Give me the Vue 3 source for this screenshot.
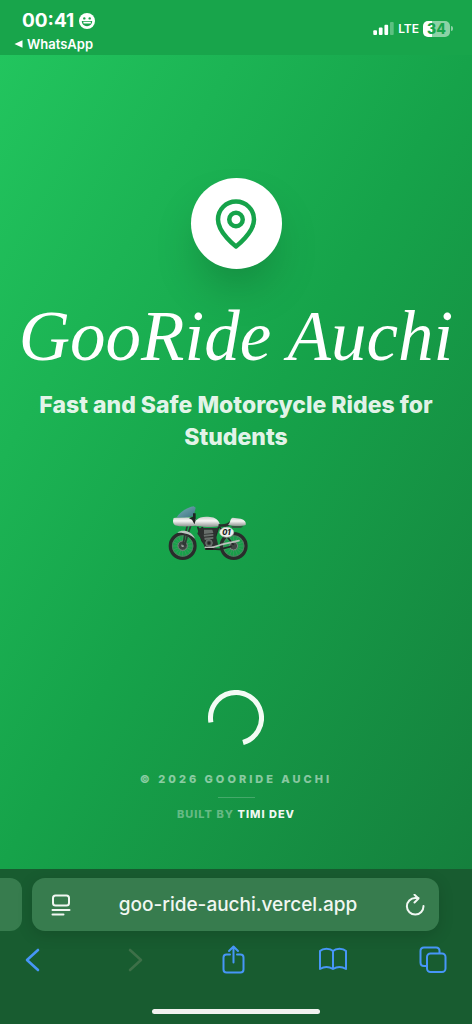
<script setup>
const year = 2026
const address = 'goo-ride-auchi.vercel.app'
</script>

<template>
  <div class="screen">
    <header class="status">
      <div class="status-left">
        <div class="clock">
          <time>00:41</time>
          <svg class="face" viewBox="0 0 16 16" aria-hidden="true">
            <circle cx="8" cy="8" r="8" fill="#fff" />
            <circle cx="5.3" cy="5.4" r="1.2" fill="#18a34a" />
            <circle cx="10.7" cy="5.4" r="1.2" fill="#18a34a" />
            <path d="M2.8 8h10.4c0 3-2.2 5.2-5.2 5.2S2.8 11 2.8 8Z" fill="#18a34a" />
            <path d="M4.2 8.800h7.600v1.800H4.600Z" fill="#fff" />
          </svg>
        </div>
        <a class="back-app" href="#">
          <svg viewBox="0 0 9 8" aria-hidden="true"><path d="M0.5 4 8.5 0.3v7.4Z" fill="#fff" /></svg>
          WhatsApp
        </a>
      </div>
      <div class="status-right">
        <svg class="signal" viewBox="0 0 22 14" aria-hidden="true" fill="#fff">
          <rect x="0" y="9" width="4" height="5" rx="1" />
          <rect x="6" y="6" width="4" height="8" rx="1" />
          <rect x="12" y="3" width="4" height="11" rx="1" />
          <rect x="18" y="0" width="4" height="14" rx="1" opacity=".3" />
        </svg>
        <span class="network">LTE</span>
        <span class="battery">34</span>
        <span class="nub"></span>
      </div>
    </header>

    <main class="splash">
      <div class="logo">
        <svg viewBox="0 0 24 24" fill="none" stroke="#16a34a" stroke-width="2" stroke-linejoin="round" aria-hidden="true">
          <path d="M20 10c0 6-8 12-8 12s-8-6-8-12a8 8 0 0 1 16 0Z" />
          <circle cx="12" cy="10" r="3" />
        </svg>
      </div>
      <h1>GooRide Auchi</h1>
      <p class="tagline">Fast and Safe Motorcycle Rides for Students</p>

      <svg class="bike" viewBox="0 0 246 165" role="img" aria-label="Motorcycle">
        <defs>
          <linearGradient id="shell" x1="0" y1="0" x2="0" y2="1">
            <stop offset="0" stop-color="#c9cdca" />
            <stop offset=".4" stop-color="#f6f6f4" />
            <stop offset="1" stop-color="#8d9390" />
          </linearGradient>
          <linearGradient id="glass" x1="0" y1="0" x2="1" y2="1">
            <stop offset="0" stop-color="#78aeb9" />
            <stop offset="1" stop-color="#3f7482" />
          </linearGradient>
        </defs>
        <g fill="none">
          <g stroke="#7f8883" stroke-width="1">
            <path d="M47 84v72M11 120h72M22 95l50 50M72 95l-50 50M33 87l28 66M61 87l-28 66M14 106l66 28M80 106l-66 28" />
            <path d="M200 84v72M164 120h72M175 95l50 50M225 95l-50 50M186 87l28 66M214 87l-28 66M167 106l66 28M233 106l-66 28" />
          </g>
          <circle cx="47" cy="120" r="37" stroke="#292c2b" stroke-width="10" />
          <circle cx="200" cy="120" r="37" stroke="#292c2b" stroke-width="10" />
          <circle cx="47" cy="120" r="31" stroke="#68706c" stroke-width="2" />
          <circle cx="200" cy="120" r="31" stroke="#68706c" stroke-width="2" />
        </g>
        <circle cx="47" cy="119" r="14" fill="#3d4341" stroke="#7b837f" stroke-width="3" />
        <circle cx="47" cy="119" r="4" fill="#a5aaa7" />
        <circle cx="200" cy="120" r="12" fill="#404644" stroke="#7b837f" stroke-width="3" />
        <path d="M62 55 53 90 48 118M72 57 60 92 53 119" fill="none" stroke="#303735" stroke-width="5" />
        <path d="M31 80c9-8 25-7 34-2 10 5 16 12 19 20-12-12-30-19-53-18Z" fill="#bcc5c0" />
        <path d="M92 62 105 104l18 24 35 2 36-9M104 63l18 20M155 62l-17 55M157 62l43 55" fill="none" stroke="#242827" stroke-width="5" />
        <path d="M97 66h58l-9 20 7 29-13 17-25-1-8-26-16-22Z" fill="#2c302f" />
        <path d="M111 71h25l3 10-28 3ZM110 86l29-2v5l-28 3ZM112 95l27-2v5l-26 4Z" fill="#68706c" />
        <circle cx="126" cy="111" r="10" fill="#515955" stroke="#858e89" stroke-width="2" />
        <circle cx="126" cy="111" r="5" fill="#242827" />
        <path d="M115 124c20 4 35-4 47-8l54-12" fill="none" stroke="#b9bfba" stroke-width="5" stroke-linecap="round" />
        <path d="M115 126h24v5h-24Z" fill="#171b1a" />
        <path d="M20 36c20-4 46-3 62 1 8 3 9 10 9 18l-5 4c-22 3-46 4-62-1-6-5-8-13-4-22Z" fill="url(#shell)" />
        <path d="M29 34C39 18 58 5 80 1l6 4-6 25-20 4c-12 1-23 1-31 0Z" fill="url(#glass)" />
        <path d="M78 22h8v29l-4 3-7-13-9-4 12-5Z" fill="#1e2422" />
        <path d="M87 44c9-12 27-13 42-11 15 1 25 8 29 20l-3 8c-20 4-47 1-65-1-8-3-8-10-3-16Z" fill="url(#shell)" />
        <path d="M155 54c15 3 26-1 34-8l6 9-17 7h-24Z" fill="#292e2c" />
        <path d="M182 56c9-3 6-19 15-21l24 3c12 3 17 10 15 19-12 5-40 4-54-1Z" fill="url(#shell)" />
        <path d="M192 61h37l-7 4h-26Z" fill="#3b433f" />
        <ellipse cx="179" cy="79" rx="21" ry="15" fill="#eff0ed" stroke="#b9c0bb" stroke-width="2" />
        <text x="178" y="87" text-anchor="middle" class="plate">01</text>
      </svg>

      <svg class="spinner" viewBox="0 0 56 56" fill="none" role="img" aria-label="Loading">
        <path d="M2.9 32.4A25.5 25.5 0 1 1 35 52.5" stroke="#f2fbf4" stroke-width="5" />
      </svg>

      <footer class="credits">
        <p class="copyright">© {{ year }} GOORIDE AUCHI</p>
        <hr />
        <p class="built">BUILT BY <strong>TIMI DEV</strong></p>
      </footer>
    </main>

    <section class="browser" aria-label="Browser controls">
      <div class="tabs">
        <div class="previous-tab"></div>
        <div class="tab">
          <button aria-label="Page settings">
            <svg viewBox="0 0 20 22" fill="none" stroke="#f1f7f2" stroke-width="2" stroke-linecap="round">
              <rect x="2" y="1.5" width="16" height="10" rx="2.5" />
              <path d="M1.5 16h17M1.5 20.5h11" />
            </svg>
          </button>
          <input type="text" aria-label="Address" :value="address" />
          <button aria-label="Reload">
            <svg viewBox="0 0 20 22" fill="none" stroke="#f1f7f2" stroke-width="2" stroke-linecap="round" stroke-linejoin="round">
              <path d="M18.500 12A8.300 8.300 0 1 1 10.200 4h3.300M9.500 0.800 13.500 4.500 9.500 8.500" />
            </svg>
          </button>
        </div>
      </div>
      <nav class="tools">
        <button aria-label="Back"><svg viewBox="0 0 30 30"><path d="m19 5-11 10 11 10" stroke-width="2.6" /></svg></button>
        <button aria-label="Forward" disabled><svg viewBox="0 0 30 30"><path d="m11 5 11 10-11 10" stroke-width="2.6" /></svg></button>
        <button aria-label="Share"><svg viewBox="0 0 30 30"><path d="M11 9.500H7.500q-3 0-3 3V24.500q0 3 3 3h14q3 0 3-3V12.500q0-3-3-3h-3.500M14.500 17.500V1.500M10 6 14.500 1.500 19 6" /></svg></button>
        <button aria-label="Bookmarks"><svg viewBox="0 0 30 30"><path d="M15 6C12 3 5 3 2 6v18c4-2.5 9-2.500 13 0 4-2.500 9-2.500 13 0V6c-3-3-10-3-13 0Zm0 0v18" /></svg></button>
        <button aria-label="Tabs"><svg viewBox="0 0 30 30"><path d="M8 21H6q-3.500 0-3.500-3.500V6Q2.500 2.500 6 2.500h12q3.500 0 3.500 3.500v2" /><rect x="9" y="8.500" width="18.500" height="18.500" rx="3.500" /></svg></button>
      </nav>
      <div class="home"></div>
    </section>
  </div>
</template>

<style>
body {
  margin: 0;
}
</style>

<style scoped>
.screen {
  min-height: 100vh;
  display: flex;
  flex-direction: column;
  font-family: Inter, "Liberation Sans", sans-serif;
  color: #fff;
  overflow: hidden;
}
p, h1 {
  margin: 0;
}
button {
  padding: 0;
  border: 0;
  background: none;
  display: flex;
}
.status {
  display: flex;
  justify-content: space-between;
  box-sizing: border-box;
  min-height: 55px;
  padding: 10px 19px 0 14px;
  background: #18a54b;
}
.clock {
  display: flex;
  align-items: center;
  gap: 5px;
  padding-left: 8px;
  font-size: 19px;
  line-height: 22px;
  font-weight: 700;
}
.face {
  width: 16px;
  height: 16px;
}
.back-app {
  display: flex;
  align-items: center;
  gap: 4px;
  margin-top: 3px;
  color: #fff;
  font-size: 13px;
  line-height: 18px;
  font-weight: 600;
  text-decoration: none;
}
.back-app svg {
  width: 9px;
  height: 8px;
}
.status-right {
  display: flex;
  align-items: center;
  align-self: flex-start;
  height: 37px;
}
.signal {
  width: 21px;
  height: 13px;
}
.network {
  margin: 0 4px;
  font-size: 12px;
  font-weight: 600;
}
.battery {
  width: 27px;
  border-radius: 5px;
  background: linear-gradient(90deg, #fff 34%, #8cd2a5 34%);
  color: #18a54b;
  text-align: center;
  font-size: 14px;
  line-height: 16px;
  font-weight: 800;
}
.nub {
  width: 2px;
  height: 5px;
  margin-left: 1px;
  border-radius: 0 2px 2px 0;
  background: #8cd2a5;
}
.splash {
  flex: 1;
  display: flex;
  flex-direction: column;
  align-items: center;
  box-sizing: border-box;
  padding: 123px 24px 47px;
  background: linear-gradient(to bottom right, #22c55e 0%, #16a34a 50%, #15803d 100%);
}
.logo {
  display: grid;
  place-items: center;
  width: 91px;
  height: 91px;
  border-radius: 50%;
  background: #fff;
  box-shadow: 0 24px 48px -12px rgba(0, 0, 0, 0.25);
}
.logo svg {
  width: 54px;
  height: 54px;
}
h1 {
  margin-top: 27px;
  font-family: "Snell Roundhand", "Liberation Serif", serif;
  font-style: italic;
  font-weight: 400;
  font-size: 71px;
  line-height: 80px;
  white-space: nowrap;
}
.tagline {
  margin-top: 13px;
  color: rgba(255, 255, 255, 0.9);
  font-size: 23px;
  line-height: 32px;
  font-weight: 800;
  text-align: center;
}
.bike {
  width: 82px;
  height: 55px;
  margin: 53px 56px 0 0;
}
.plate {
  fill: #171b1a;
  font-size: 22px;
  font-style: italic;
  font-weight: 800;
}
.spinner {
  width: 56px;
  height: 56px;
  margin-top: auto;
}
.credits {
  display: flex;
  flex-direction: column;
  align-items: center;
  margin-top: 25px;
  line-height: 16px;
}
.copyright {
  color: rgba(255, 255, 255, 0.5);
  font-size: 11px;
  font-weight: 800;
  letter-spacing: 3px;
}
hr {
  width: 37px;
  height: 1px;
  margin: 10px 0 8px;
  border: 0;
  background: rgba(255, 255, 255, 0.2);
}
.built {
  color: rgba(255, 255, 255, 0.35);
  font-size: 11px;
  font-weight: 800;
  letter-spacing: 1px;
}
.built strong {
  color: rgba(255, 255, 255, 0.95);
  font-weight: 800;
}
.browser {
  padding: 9px 0 10px;
  background: #185c30;
}
.tabs {
  display: flex;
  gap: 10px;
  padding-right: 33px;
}
.previous-tab {
  width: 22px;
  border-radius: 0 12px 12px 0;
  background: #377c4e;
}
.tab {
  flex: 1;
  display: flex;
  align-items: center;
  height: 53px;
  padding: 0 14px 0 19px;
  border-radius: 13px;
  background: #377c4e;
  box-shadow: 0 4px 16px rgba(0, 0, 0, 0.14);
}
.tab svg {
  width: 20px;
  height: 22px;
}
.tab input {
  flex: 1;
  min-width: 0;
  padding: 0;
  border: 0;
  background: none;
  color: #f1f7f2;
  font-family: inherit;
  font-size: 19px;
  font-weight: 500;
  line-height: 28px;
  text-align: center;
}
.tools {
  display: flex;
  justify-content: space-between;
  padding: 14px 24px 0 19px;
}
.tools svg {
  width: 30px;
  height: 30px;
  fill: none;
  stroke: #4796f7;
  stroke-width: 2;
  stroke-linecap: round;
  stroke-linejoin: round;
}
.tools button:disabled svg {
  stroke: #3d7048;
}
.home {
  width: 168px;
  height: 5px;
  margin: 34px auto 0;
  border-radius: 3px;
  background: #f1f1ef;
}
</style>
